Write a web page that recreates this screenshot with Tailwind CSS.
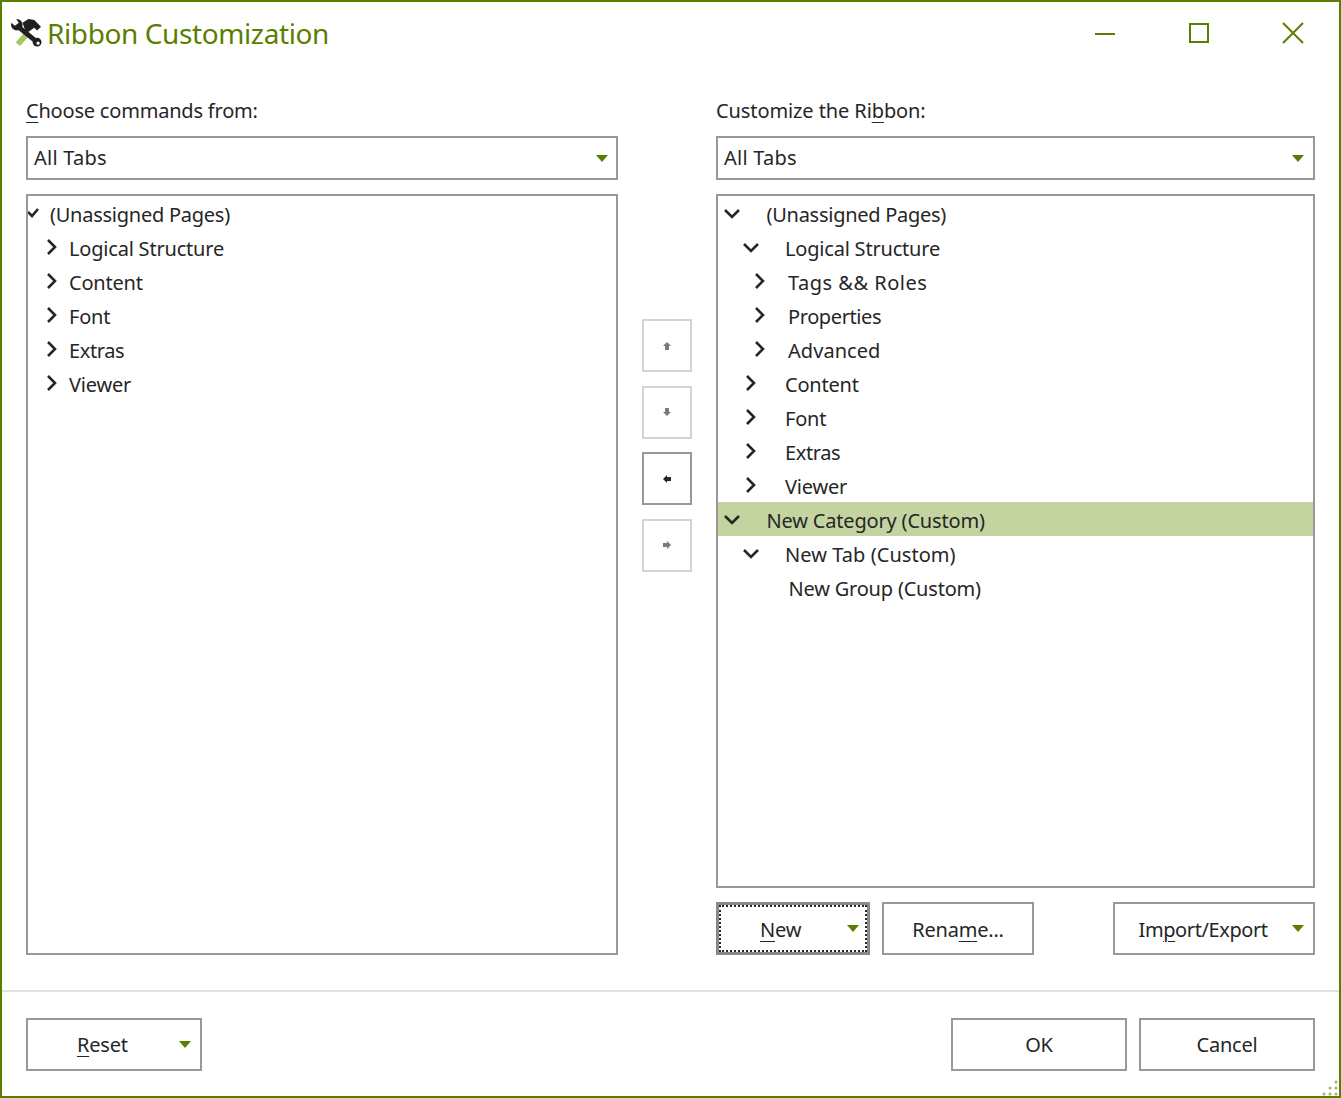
<!DOCTYPE html>
<html><head><meta charset="utf-8"><script src="https://cdn.jsdelivr.net/npm/@tailwindcss/browser@4"></script></head>
<body class="bg-white">
<div class="w-[1341px] h-[1098px] relative overflow-hidden border-2 border-[#5a7f00] bg-white flex flex-col font-['Noto_Sans',sans-serif] text-[20px] tracking-[-0.2px] text-[#262626]">
  <!-- title bar -->
  <div class="h-[62px] flex items-center shrink-0">
    <svg class="ml-[9px] w-[31px] h-[29px] mb-[2px]" viewBox="0 0 32 30">
      <path d="M7 27 L18 15" stroke="#a4c862" stroke-width="6"/>
      <path d="M12 5 L18 1 L24 2 L31 9 L27 13 L24 10 L20 13 L17 15 L14 11 Z" fill="#1f1f1f"/>
      <path d="M6 8 L27 25" stroke="#1f1f1f" stroke-width="5"/>
      <circle cx="6" cy="7" r="6" fill="#1f1f1f"/>
      <path d="M4 -1 L8 5 L4 8 L-1 4 L-1 -1Z" fill="#fff"/>
      <circle cx="27" cy="25" r="4.5" fill="#1f1f1f"/>
      <circle cx="28" cy="26" r="1.6" fill="#fff"/>
    </svg>
    <span class="ml-[5px] text-[28px] tracking-[-0.4px] leading-none text-[#5a7f00]">Ribbon Customization</span>
    <div class="ml-auto mr-[31px] flex items-center gap-[64px]">
      <svg class="w-[30px] h-[30px]" viewBox="0 0 30 30"><rect x="5" y="15" width="20" height="2" fill="#5a7f00"/></svg>
      <svg class="w-[30px] h-[30px]" viewBox="0 0 30 30"><rect x="6" y="6" width="18" height="18" fill="none" stroke="#5a7f00" stroke-width="2"/></svg>
      <svg class="w-[30px] h-[30px]" viewBox="0 0 30 30"><path d="M5 5 L25 25 M25 5 L5 25" stroke="#5a7f00" stroke-width="2"/></svg>
    </div>
  </div>
  <!-- body -->
  <div class="flex-1 flex px-[24px] pt-[32px]">
    <!-- left -->
    <div class="w-[592px] flex flex-col">
      <div class="h-[30px] leading-[30px] mb-[10px]"><span class="underline underline-offset-[4px] decoration-1">C</span>hoose commands from:</div>
      <div class="h-[44px] border-2 border-[#999999] flex items-center justify-between pl-[6px] pr-[8px]"><span class="tracking-[0.25px]">All Tabs</span><svg class="w-[12px] h-[7px]" viewBox="0 0 12 7"><path d="M0 0H12L6 7Z" fill="#5a7f00"/></svg></div>
      <div class="mt-[14px] h-[761px] border-2 border-[#999999]">
        <div class="h-[34px] flex items-center"><svg class="w-[12px] h-[10px]" viewBox="0 0 12 10"><path d="M0 4L4 8L10 1" fill="none" stroke="#262626" stroke-width="2.6"/></svg><span class="ml-[10px] pt-[4px] tracking-[-0.25px]">(Unassigned Pages)</span></div>
        <div class="h-[34px] flex items-center"><svg class="ml-[18px] w-[12px] h-[16px]" viewBox="0 0 12 16"><path d="M2 1L9 8L2 15" fill="none" stroke="#262626" stroke-width="2.6"/></svg><span class="ml-[11px] pt-[4px]">Logical Structure</span></div>
        <div class="h-[34px] flex items-center"><svg class="ml-[18px] w-[12px] h-[16px]" viewBox="0 0 12 16"><path d="M2 1L9 8L2 15" fill="none" stroke="#262626" stroke-width="2.6"/></svg><span class="ml-[11px] pt-[4px]">Content</span></div>
        <div class="h-[34px] flex items-center"><svg class="ml-[18px] w-[12px] h-[16px]" viewBox="0 0 12 16"><path d="M2 1L9 8L2 15" fill="none" stroke="#262626" stroke-width="2.6"/></svg><span class="ml-[11px] pt-[4px]">Font</span></div>
        <div class="h-[34px] flex items-center"><svg class="ml-[18px] w-[12px] h-[16px]" viewBox="0 0 12 16"><path d="M2 1L9 8L2 15" fill="none" stroke="#262626" stroke-width="2.6"/></svg><span class="ml-[11px] pt-[4px] tracking-[-0.4px]">Extras</span></div>
        <div class="h-[34px] flex items-center"><svg class="ml-[18px] w-[12px] h-[16px]" viewBox="0 0 12 16"><path d="M2 1L9 8L2 15" fill="none" stroke="#262626" stroke-width="2.6"/></svg><span class="ml-[11px] pt-[4px]">Viewer</span></div>
      </div>
    </div>
    <!-- middle -->
    <div class="w-[50px] mx-[24px] pt-[223px] flex flex-col gap-[13.6px]">
      <div class="h-[53px] border-2 border-[#d4d4d4] flex items-center justify-center"><svg class="w-[10px] h-[10px]" viewBox="0 0 10 10"><path d="M5 1L9 5H7V9H3V5H1Z" fill="#7a7a7a"/></svg></div>
      <div class="h-[53px] border-2 border-[#d4d4d4] flex items-center justify-center"><svg class="w-[10px] h-[10px]" viewBox="0 0 10 10"><path d="M5 9L9 5H7V1H3V5H1Z" fill="#7a7a7a"/></svg></div>
      <div class="h-[53px] border-2 border-[#999999] flex items-center justify-center"><svg class="w-[10px] h-[10px]" viewBox="0 0 10 10"><path d="M1 5L5 1V3H9V7H5V9Z" fill="#262626"/></svg></div>
      <div class="h-[53px] border-2 border-[#d4d4d4] flex items-center justify-center"><svg class="w-[10px] h-[10px]" viewBox="0 0 10 10"><path d="M9 5L5 1V3H1V7H5V9Z" fill="#7a7a7a"/></svg></div>
    </div>
    <!-- right -->
    <div class="w-[599px] flex flex-col">
      <div class="h-[30px] leading-[30px] mb-[10px] tracking-[-0.1px]">Customize the Ri<span class="underline underline-offset-[4px] decoration-1">b</span>bon:</div>
      <div class="h-[44px] border-2 border-[#999999] flex items-center justify-between pl-[6px] pr-[9px]"><span class="tracking-[0.25px]">All Tabs</span><svg class="w-[12px] h-[7px]" viewBox="0 0 12 7"><path d="M0 0H12L6 7Z" fill="#5a7f00"/></svg></div>
      <div class="mt-[14px] h-[694px] border-2 border-[#999999]">
        <div class="h-[34px] flex items-center"><svg class="ml-[6px] w-[16px] h-[10px] mt-[1px]" viewBox="0 0 16 10"><path d="M1 1L8 8L15 1" fill="none" stroke="#262626" stroke-width="2.6"/></svg><span class="ml-[26.5px] pt-[4px] tracking-[-0.27px]">(Unassigned Pages)</span></div>
        <div class="h-[34px] flex items-center"><svg class="ml-[25px] w-[16px] h-[10px] mt-[1px]" viewBox="0 0 16 10"><path d="M1 1L8 8L15 1" fill="none" stroke="#262626" stroke-width="2.6"/></svg><span class="ml-[26px] pt-[4px]">Logical Structure</span></div>
        <div class="h-[34px] flex items-center"><svg class="ml-[36px] w-[12px] h-[16px]" viewBox="0 0 12 16"><path d="M2 1L9 8L2 15" fill="none" stroke="#262626" stroke-width="2.6"/></svg><span class="ml-[22px] pt-[4px] tracking-[0.5px]">Tags &amp;&amp; Roles</span></div>
        <div class="h-[34px] flex items-center"><svg class="ml-[36px] w-[12px] h-[16px]" viewBox="0 0 12 16"><path d="M2 1L9 8L2 15" fill="none" stroke="#262626" stroke-width="2.6"/></svg><span class="ml-[22px] pt-[4px] tracking-[-0.4px]">Properties</span></div>
        <div class="h-[34px] flex items-center"><svg class="ml-[36px] w-[12px] h-[16px]" viewBox="0 0 12 16"><path d="M2 1L9 8L2 15" fill="none" stroke="#262626" stroke-width="2.6"/></svg><span class="ml-[22px] pt-[4px] tracking-[0.05px]">Advanced</span></div>
        <div class="h-[34px] flex items-center"><svg class="ml-[27px] w-[12px] h-[16px]" viewBox="0 0 12 16"><path d="M2 1L9 8L2 15" fill="none" stroke="#262626" stroke-width="2.6"/></svg><span class="ml-[28px] pt-[4px]">Content</span></div>
        <div class="h-[34px] flex items-center"><svg class="ml-[27px] w-[12px] h-[16px]" viewBox="0 0 12 16"><path d="M2 1L9 8L2 15" fill="none" stroke="#262626" stroke-width="2.6"/></svg><span class="ml-[28px] pt-[4px]">Font</span></div>
        <div class="h-[34px] flex items-center"><svg class="ml-[27px] w-[12px] h-[16px]" viewBox="0 0 12 16"><path d="M2 1L9 8L2 15" fill="none" stroke="#262626" stroke-width="2.6"/></svg><span class="ml-[28px] pt-[4px] tracking-[-0.4px]">Extras</span></div>
        <div class="h-[34px] flex items-center"><svg class="ml-[27px] w-[12px] h-[16px]" viewBox="0 0 12 16"><path d="M2 1L9 8L2 15" fill="none" stroke="#262626" stroke-width="2.6"/></svg><span class="ml-[28px] pt-[4px]">Viewer</span></div>
        <div class="h-[34px] flex items-center bg-[#c3d4a0]"><svg class="ml-[6px] w-[16px] h-[10px] mt-[1px]" viewBox="0 0 16 10"><path d="M1 1L8 8L15 1" fill="none" stroke="#262626" stroke-width="2.6"/></svg><span class="ml-[26.5px] pt-[4px] tracking-[-0.18px]">New Category (Custom)</span></div>
        <div class="h-[34px] flex items-center"><svg class="ml-[25px] w-[16px] h-[10px] mt-[1px]" viewBox="0 0 16 10"><path d="M1 1L8 8L15 1" fill="none" stroke="#262626" stroke-width="2.6"/></svg><span class="ml-[26px] pt-[4px] tracking-[0.05px]">New Tab (Custom)</span></div>
        <div class="h-[34px] flex items-center"><span class="ml-[70.5px] pt-[4px]">New Group (Custom)</span></div>
      </div>
      <div class="mt-[14px] flex">
        <button class="w-[154px] h-[53px] border-[3px] border-[#8a8a8a] relative"><span class="absolute inset-0 border-2 border-dotted border-[#262626]"></span><span class="flex items-center h-full pl-[41px] pr-[8px] justify-between"><span class="pt-[2px]"><span class="underline underline-offset-[4px] decoration-1">N</span>ew</span><svg class="w-[12px] h-[7px]" viewBox="0 0 12 7"><path d="M0 0H12L6 7Z" fill="#5a7f00"/></svg></span></button>
        <button class="ml-[12px] w-[152px] h-[53px] border-2 border-[#999999] pt-[2px]">Rena<span class="underline underline-offset-[4px] decoration-1">m</span>e...</button>
        <button class="ml-auto w-[202px] h-[53px] border-2 border-[#999999] flex items-center justify-between pl-[23.5px] pr-[9px]"><span class="pt-[2px] tracking-[-0.4px]">Im<span class="underline underline-offset-[4px] decoration-1">p</span>ort/Export</span><svg class="w-[12px] h-[7px]" viewBox="0 0 12 7"><path d="M0 0H12L6 7Z" fill="#5a7f00"/></svg></button>
      </div>
    </div>
  </div>
  <!-- footer -->
  <div class="h-[2px] bg-[#e0e0e0] shrink-0"></div>
  <div class="h-[104px] shrink-0 flex px-[24px] pt-[26px]">
    <button class="w-[176px] h-[53px] border-2 border-[#999999] flex items-center justify-between pl-[49px] pr-[9px]"><span><span class="underline underline-offset-[4px] decoration-1">R</span>eset</span><svg class="w-[12px] h-[7px]" viewBox="0 0 12 7"><path d="M0 0H12L6 7Z" fill="#5a7f00"/></svg></button>
    <button class="ml-auto w-[176px] h-[53px] border-2 border-[#999999]">OK</button>
    <button class="ml-[12px] w-[176px] h-[53px] border-2 border-[#999999]">Cancel</button>
  </div>
  <svg class="absolute right-0 bottom-0 w-[20px] h-[20px]" viewBox="0 0 20 20" fill="#9ab866"><circle cx="17" cy="6" r="1.5"/><circle cx="17" cy="12" r="1.5"/><circle cx="11" cy="12" r="1.5"/><circle cx="17" cy="18" r="1.5"/><circle cx="11" cy="18" r="1.5"/><circle cx="5" cy="18" r="1.5"/></svg>
</div>
</body></html>
